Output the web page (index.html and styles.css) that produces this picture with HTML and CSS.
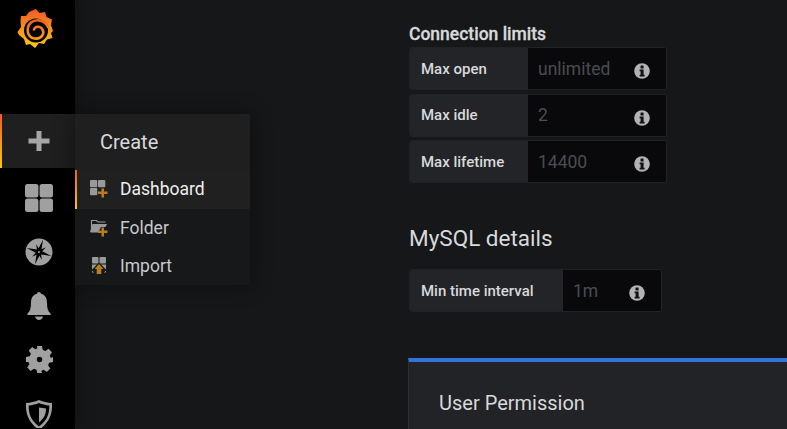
FILE: index.html
```html
<!DOCTYPE html>
<html lang="en">
<head>
<meta charset="utf-8">
<title>MySQL data source</title>
<link rel="stylesheet" href="styles.css">
</head>
<body>
<svg class="defs" width="0" height="0" aria-hidden="true">
  <defs>
    <linearGradient id="sun" x1="0" y1="0" x2="0" y2="1">
      <stop offset="0" stop-color="#f05a28"/>
      <stop offset="1" stop-color="#fbca0a"/>
    </linearGradient>
    <linearGradient id="spiral" gradientUnits="userSpaceOnUse" x1="0" y1="18" x2="0" y2="40">
      <stop offset="0" stop-color="#f05a28"/>
      <stop offset="1" stop-color="#f9a01c"/>
    </linearGradient>
    <g id="info">
      <circle cx="8" cy="8" r="7.8" fill="#b3b3b3"/>
      <rect x="6.5" y="2.6" width="3.1" height="2.9" rx=".5" fill="#111214"/>
      <path d="M5.6 6.6h4v5.2h1v1.7H5.6v-1.7h1v-3.5h-1z" fill="#111214"/>
    </g>
  </defs>
</svg>

<nav class="sidebar">
  <a class="logo" href="#">
    <svg width="38" height="41" viewBox="16 8 38 41">
      <path fill="url(#sun)" d="M36 9l3.500 4 5.500-1 1.500 5 5.500 2.500-1 5.500 2 6-2 2 1.500 5-5.500 1.500-3 4.500-5-1-4 5-5-4-4 1-2-6-5-4-1.500-3 3.500-5-.5-6 .5-5h5l3-4z"/>
      <circle cx="36" cy="30.500" r="12" fill="#000"/>
      <path fill="none" stroke="url(#spiral)" stroke-width="2.600" stroke-linecap="round" d="M48 27C45 20 36 18.500 31 22.500 25.500 27.500 27 37.500 34.500 38.500 41 39.500 45 34 42.500 29.500 40.500 25.500 35 26 34 29.500"/>
    </svg>
  </a>
  <a class="nav-item nav-item-active" href="#">
    <svg width="22" height="20" viewBox="0 0 22 20"><path fill="#a6a6a6" d="M8.500 0h5v7.500H21.500v5h-8V20h-5v-7.500H.5v-5h8z"/></svg>
  </a>
  <a class="nav-item nav-item-first" href="#">
    <svg width="28" height="28" viewBox="0 0 28 28"><g fill="#a0a0a0"><rect width="13.400" height="13.400" rx="2.500"/><rect x="14.600" width="13.400" height="13.400" rx="2.500"/><rect y="14.600" width="13.400" height="13.400" rx="2.500"/><rect x="14.600" y="14.600" width="13.400" height="13.400" rx="2.500"/></g></svg>
  </a>
  <a class="nav-item" href="#">
    <svg width="28" height="28" viewBox="0 0 28 28"><circle cx="14" cy="14" r="13.500" fill="#a0a0a0"/><g transform="rotate(18 14 14)"><path fill="#000" d="M14 1l1.500 9.600 3.600-3.200-2.300 4.800L27 14l-10.200 1.800 2.300 4.800-3.600-3.200L14 27l-1.500-9.600-3.600 3.200 2.300-4.800L1 14l10.200-1.800-2.300-4.800 3.600 3.200z"/></g><circle cx="14" cy="14" r="1" fill="#a0a0a0"/></svg>
  </a>
  <a class="nav-item" href="#">
    <svg width="24" height="28" viewBox="0 0 24 28"><path fill="#a0a0a0" d="M12 0c1.200 0 2 .8 2 1.800C18.500 3 20 6.500 20 11c0 5 1 8.500 3.500 10.500.5.500.5 1.500-.5 1.500H1c-1 0-1-1-.5-1.500C3 19.500 4 16 4 11c0-4.500 1.500-8 6-9.200C10 .8 10.800 0 12 0z"/><path fill="#a0a0a0" d="M8 24.500h8C15.500 26.500 14 28 12 28s-3.500-1.500-4-3.500z"/></svg>
  </a>
  <a class="nav-item" href="#">
    <svg width="27" height="27" viewBox="0 0 27 27"><path fill="#a0a0a0" fill-rule="evenodd" d="M11 0h5l.7 3.800 2.600 1.100 3.200-2.200 3.500 3.500-2.200 3.200 1.100 2.600L27 11v5l-3.800.7-1.100 2.600 2.200 3.200-3.500 3.500-3.200-2.200-2.100 1L15.800 27h-4.600l-.7-3.200-2.600-1.100-3.200 2.200-3.500-3.500 2.200-3.200-1.100-2.300L0 16v-5l3.800-.7 1.100-2.600-2.200-3.200 3.500-3.500 3.200 2.200 2-1zM13.500 10.800a2.700 2.700 0 1 0 0 5.400 2.700 2.700 0 0 0 0-5.400z"/></svg>
  </a>
  <a class="nav-item" href="#">
    <svg width="26" height="28" viewBox="0 0 26 28"><path fill="#a0a0a0" fill-rule="evenodd" d="M13 0c4 1.800 8.500 2.800 13 3 .3 9-1 18-13 27C1 21 -.3 12 0 3c4.500-.2 9-1.200 13-3zm0 3C9.800 4.300 6.300 5.200 2.700 5.500 2.600 12.500 4 19.500 13 26.500c9-7 10.400-14 10.300-21C19.700 5.200 16.200 4.300 13 3z"/><path fill="#a0a0a0" d="M13 7.500l7 1c0 5-1.500 9.500-7 14z"/></svg>
  </a>
</nav>

<div class="flyout">
  <div class="flyout-title">Create</div>
  <ul class="flyout-list">
    <li class="flyout-item flyout-item-active">
      <svg width="18" height="18" viewBox="0 0 18 18"><g fill="#999"><rect x="0" y="0" width="7.300" height="7.300" rx="1"/><rect x="8" y="0" width="7.300" height="7.300" rx="1"/><rect x="0" y="8" width="7.300" height="7.300" rx="1"/></g><path fill="#b97c22" d="M11.500 8.500h2.500v3h3.500v2.500H14v3.500h-2.500V14H8v-2.500h3.500z"/></svg>
      <span>Dashboard</span>
    </li>
    <li class="flyout-item">
      <svg width="18" height="18" viewBox="0 0 18 18"><path fill="none" stroke="#999" stroke-width="1.200" d="M1.500 11V1.500h5L8 3h7.500"/><path fill="#999" d="M0 13l2.500-8H17l-1.500 3H11l-1.500 3-1 2.500H1z"/><path fill="#b97c22" d="M11.500 8.500h2.500v3h3.500v2.500H14v3.500h-2.500V14H8v-2.500h3.500z"/></svg>
      <span>Folder</span>
    </li>
    <li class="flyout-item">
      <svg width="16" height="18" viewBox="0 0 16 18"><g fill="#999"><rect x="1" y="0" width="6.500" height="6.500" rx="1"/><rect x="8.500" y="0" width="6.500" height="6.500" rx="1"/><path d="M1 7.500h5L1 12.500zM15 7.500h-5l5 5zM1 13.500l2 2H1zM15 13.500l-2 2h2z"/></g><path fill="#b97c22" d="M8 7l4.500 5H10.300v5H5.700v-5H3.500z"/></svg>
      <span>Import</span>
    </li>
  </ul>
</div>

<main class="main">
  <div class="form-column">
    <h3 class="section-label">Connection limits</h3>
    <div class="row-list">
      <div class="field">
        <div class="field-label">Max open</div>
        <div class="field-input"><span class="placeholder">unlimited</span><svg class="info" width="16" height="16" viewBox="0 0 16 16"><use href="#info"/></svg></div>
      </div>
      <div class="field">
        <div class="field-label">Max idle</div>
        <div class="field-input"><span class="placeholder">2</span><svg class="info" width="16" height="16" viewBox="0 0 16 16"><use href="#info"/></svg></div>
      </div>
      <div class="field">
        <div class="field-label">Max lifetime</div>
        <div class="field-input"><span class="placeholder">14400</span><svg class="info" width="16" height="16" viewBox="0 0 16 16"><use href="#info"/></svg></div>
      </div>
    </div>
    <h2 class="section-title">MySQL details</h2>
    <div class="field field-wide">
      <div class="field-label">Min time interval</div>
      <div class="field-input"><span class="placeholder">1m</span><svg class="info" width="16" height="16" viewBox="0 0 16 16"><use href="#info"/></svg></div>
    </div>
  </div>
  <section class="panel">
    <h2 class="panel-title">User Permission</h2>
  </section>
</main>
</body>
</html>
```
FILE: styles.css
```css
* { box-sizing: border-box; }
html, body { margin: 0; height: 100%; }
body {
  display: flex;
  height: 429px;
  overflow: hidden;
  background: #161719;
  font-family: Roboto, "Liberation Sans", sans-serif;
  color: #d8d9da;
}
.defs { position: absolute; }
a { color: inherit; text-decoration: none; }

.sidebar {
  width: 75px;
  flex: none;
  height: 429px;
  background: #000;
  display: flex;
  flex-direction: column;
  overflow: hidden;
  box-shadow: 0 0 18px rgba(0, 0, 0, .35);
}
.logo {
  height: 114px;
  flex: none;
  display: flex;
  justify-content: center;
  padding: 8px 5px 0 0;
  align-items: flex-start;
}
.nav-item {
  height: 54px;
  flex: none;
  display: flex;
  align-items: center;
  justify-content: center;
  padding: 1px 0 0 3px;
}
.nav-item-first { margin-top: 2px; }
.nav-item-active {
  background: #1f1f20;
  border-left: 2px solid;
  border-image: linear-gradient(#f05a28, #fbca0a) 1;
  padding: 0;
}

.flyout {
  position: absolute;
  left: 75px;
  top: 114px;
  width: 175px;
  height: 171px;
  background: #17181a;
  box-shadow: 0 0 20px rgba(0, 0, 0, .45);
}
.flyout-title {
  height: 56px;
  background: #1f1f20;
  padding: 16px 0 0 25px;
  font-size: 20px;
  line-height: 24px;
  color: #d8d9da;
}
.flyout-list { list-style: none; margin: 0; padding: 0; }
.flyout-item {
  height: 38.500px;
  display: flex;
  align-items: center;
  gap: 12px;
  padding-left: 15px;
  font-size: 17.500px;
  color: #c7c8ca;
}
.flyout-item svg { flex: none; width: 18px; }
.flyout-item-active {
  background: #202020;
  color: #eee;
  border-left: 2px solid;
  border-image: linear-gradient(#f05a28, #fbca0a) 1;
  padding-left: 13px;
}

.main { flex: 1; min-width: 0; padding-top: 25px; }
.form-column { margin-left: 334px; width: 258px; }
.section-label {
  margin: 0 0 4px;
  font-size: 17.500px;
  line-height: 18px;
  font-weight: 500;
  color: #d8d9da;
  white-space: nowrap;
  -webkit-text-stroke: .3px #d8d9da;
}
.row-list { display: flex; flex-direction: column; gap: 3.500px; }
.field {
  display: flex;
  height: 43px;
  border: 1px solid #202226;
  border-radius: 3px;
  overflow: hidden;
}
.field-label {
  width: 118px;
  flex: none;
  background: #222428;
  display: flex;
  align-items: center;
  padding-left: 11px;
  font-size: 15px;
  font-weight: 500;
  color: #d8d9da;
  white-space: nowrap;
}
.field-input {
  flex: 1;
  background: #09090b;
  display: flex;
  align-items: center;
  justify-content: space-between;
  padding: 0 16px 0 10px;
}
.placeholder {
  font-size: 17.500px;
  line-height: 20px;
  color: #4a4d52;
}
.info { flex: none; margin-top: 5px; }
.section-title {
  margin: 41px 0 17px;
  font-size: 22.500px;
  line-height: 28px;
  font-weight: 400;
  color: #d8d9da;
}
.field-wide { width: 253px; }
.field-wide .field-label { width: 153px; }

.panel {
  margin: 46px 0 0 333px;
  height: 80px;
  background: #212327;
  border-top: 4px solid #3274d9;
  border-left: 1px solid #2c2e33;
  padding: 29px 30px 0;
}
.panel-title {
  margin: 0;
  font-size: 20px;
  line-height: 24px;
  font-weight: 400;
  color: #d8d9da;
}
```
